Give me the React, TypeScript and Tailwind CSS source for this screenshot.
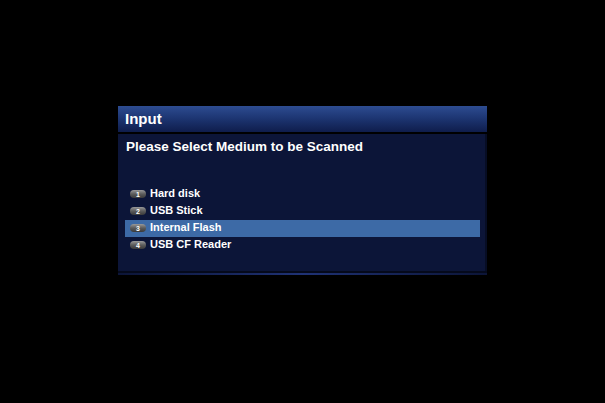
const ITEMS = [
  { n: "1", label: "Hard disk" },
  { n: "2", label: "USB Stick" },
  { n: "3", label: "Internal Flash" },
  { n: "4", label: "USB CF Reader" },
]

const SELECTED = 2

export default function App() {
  return (
    <div className="w-[605px] h-[403px] bg-black pt-[106px] pl-[118px] font-['Liberation_Sans',Arial,sans-serif] font-bold text-white">
      <div className="w-[369px]">
        {/* title bar */}
        <div className="h-[26px] flex items-center px-[7px] bg-gradient-to-b from-[#2d4c91] via-[#1c3470] to-[#0f1d4c] text-[15px]">
          Input
        </div>
        <div className="h-[2px] bg-black" />

        {/* body */}
        <div className="flex">
          <div className="flex-1 h-[137px] bg-[#0c1538] pl-[7px] pr-[5px] pt-[5px]">
            <div className="pl-[1px] text-[13.5px] leading-[16px]">Please Select Medium to be Scanned</div>
            <div className="mt-[31px]">
              {ITEMS.map((item, i) => (
                <div
                  key={item.n}
                  className={`h-[17px] flex items-center ${i === SELECTED ? "bg-[#3d6aa6]" : ""}`}
                >
                  <div className="ml-[5px] mb-[1px] w-[16px] h-[8px] rounded-full bg-gradient-to-b from-[#9a9a9a] via-[#5c5c5c] to-[#3a3a3a] flex items-center justify-center text-[7px] leading-none text-white">
                    {item.n}
                  </div>
                  <span className="ml-[4px] mb-[3px] text-[11px] leading-none">{item.label}</span>
                </div>
              ))}
            </div>
          </div>
          <div className="w-[2px] bg-[#070d24]" />
        </div>
        <div className="h-[2px] bg-[#050a1c]" />
        <div className="h-[2px] bg-gradient-to-r from-[#0c1538] via-[#1f3275] to-[#0c1538]" />
      </div>
    </div>
  )
}
